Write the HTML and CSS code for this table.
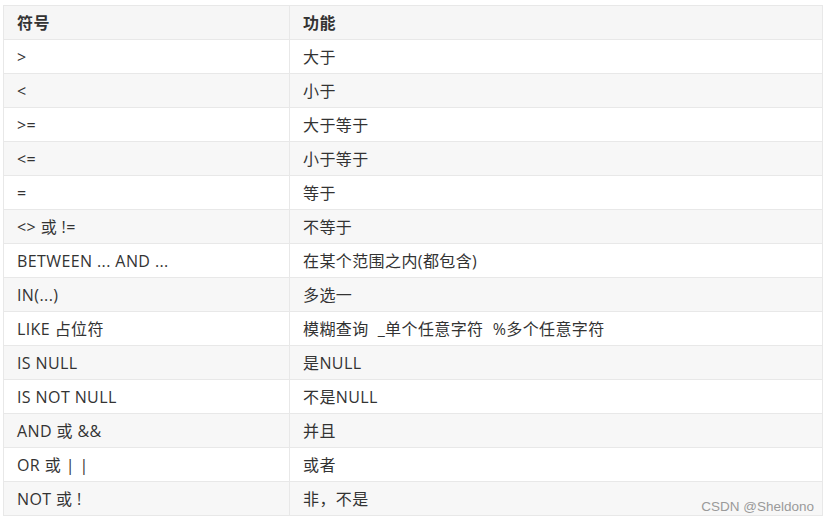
FILE: index.html
```html
<!DOCTYPE html>
<html lang="zh">
<head>
<meta charset="utf-8">
<link rel="stylesheet" href="styles.css">
</head>
<body>
<div class="page">
<table class="ops">
<thead>
<tr><th class="c1">符号</th><th>功能</th></tr>
</thead>
<tbody>
<tr><td>&gt;</td><td>大于</td></tr>
<tr><td>&lt;</td><td>小于</td></tr>
<tr><td>&gt;=</td><td>大于等于</td></tr>
<tr><td>&lt;=</td><td>小于等于</td></tr>
<tr><td>=</td><td>等于</td></tr>
<tr><td>&lt;&gt; 或 !=</td><td>不等于</td></tr>
<tr><td>BETWEEN ... AND ...</td><td>在某个范围之内(都包含)</td></tr>
<tr><td>IN(...)</td><td>多选一</td></tr>
<tr><td>LIKE 占位符</td><td>模糊查询 &nbsp;_单个任意字符 &nbsp;%多个任意字符</td></tr>
<tr><td>IS NULL</td><td>是NULL</td></tr>
<tr><td>IS NOT NULL</td><td>不是NULL</td></tr>
<tr><td>AND 或 &amp;&amp;</td><td>并且</td></tr>
<tr><td>OR 或 | |</td><td>或者</td></tr>
<tr><td>NOT 或 !</td><td>非，不是</td></tr>
</tbody>
</table>
<span class="mark">CSDN @Sheldono</span>
</div>
</body>
</html>
```
FILE: styles.css
```css
html, body {
  margin: 0;
  padding: 0;
  background: #ffffff;
}
.page {
  position: relative;
  width: 828px;
  height: 522px;
  padding: 5px 0 0 3px;
  box-sizing: border-box;
}
.ops {
  border-collapse: collapse;
  width: 820px;
  font-family: "Open Sans", "Noto Sans CJK SC", sans-serif;
  font-size: 16px;
  letter-spacing: 0.4px;
  color: #333333;
}
.ops th, .ops td {
  height: 34px;
  padding: 0 13px;
  border: 1px solid #e8e8e8;
  text-align: left;
  vertical-align: middle;
  box-sizing: border-box;
  line-height: 20px;
}
.ops th {
  font-weight: bold;
  background: #f6f6f6;
}
.ops .c1 {
  width: 286px;
}
.ops tbody tr:nth-child(odd) td {
  background: #ffffff;
}
.ops tbody tr:nth-child(even) td {
  background: #f7f7f7;
}
.mark {
  position: absolute;
  right: 14px;
  top: 499px;
  font-family: "Liberation Sans", Arial, sans-serif;
  font-size: 13.5px;
  color: #9a9a9a;
}
```
